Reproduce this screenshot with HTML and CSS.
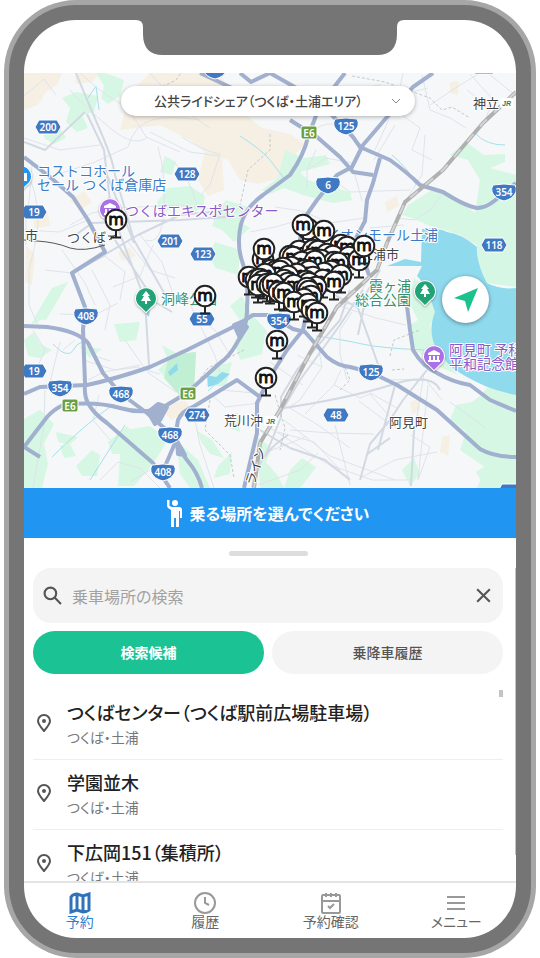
FILE: index.html
```html
<!DOCTYPE html>
<html lang="ja">
<head>
    <meta charset="UTF-8">
    <meta name="viewport" content="width=device-width, initial-scale=1.0">
    <title>公共ライドシェア</title>
    <link rel="stylesheet" href="styles.css">
</head>
<body>
    <div class="phone">
        <div class="bezel">
            <main class="screen">
                <div class="statusbar">
                    <svg class="notch" viewBox="0 0 268 35" aria-hidden="true">
                        <path d="M0 0Q7 0 7 7V14Q7 35 27 35H241Q261 35 261 14V7Q261 0 268 0Z"/>
                    </svg>
                </div>

                <section class="map-area">
                    <svg class="map" viewBox="24 73 492 415" preserveAspectRatio="xMidYMid slice">
                        <defs>
                            <g id="stop">
                                <path class="post" d="M0 10V17M-5 17.5H5"/>
                                <circle class="stop-face" r="10.3"/>
                                <text class="stop-m" y="5">m</text>
                            </g>
                            <path id="hex" d="M-9 -7H9L13 0L9 7H-9L-13 0Z"/>
                            <path id="shield" d="M-11 -7Q0 -9 11 -7Q13 -4 12 0Q9 7 0 9Q-9 7 -12 0Q-13 -4 -11 -7Z"/>
                            <rect id="express" x="-8" y="-7" width="16" height="13" rx="2"/>
                            <path id="tree" d="M0 -7L4 -2H2L5 3H1V6H-1V3H-5L-2 -2H-4Z"/>
                            <path id="museum" d="M0 -6L6 -3V-1H-6V-3ZM-5 0H-3V4H-5ZM-1 0H1V4H-1ZM3 0H5V4H3ZM-6 4H6V6H-6Z"/>
                            <path id="poi" d="M0 14L-5 9A10 10 0 1 1 5 9Z"/>
                        </defs>

                        <rect class="land" x="24" y="73" width="492" height="415"/>

                        <!-- Built-up patches -->
                        <g class="sand">
                            <path d="M24 73H62L57 85L45 93L38 105L24 110ZM75 73H100L92 82L76 84ZM130 92L150 73H220L240 110L262 128L290 134L305 144L290 160L280 178L258 184L240 180L228 160L205 152L190 140L160 125L120 130Z"/>
                            <path d="M205 152L222 158L224 190L208 196L198 180ZM70 200L84 191L92 202L80 210ZM33 206L48 212L50 226L34 228ZM26 245L35 255L32 285L25 282ZM167 405L185 400L190 408L172 420L165 414ZM118 252L130 248L136 256L122 261ZM385 202L397 196L399 206L387 212ZM410 402L418 399L420 410L412 414ZM442 437L450 435L448 456L440 452ZM450 82L459 81L458 95L450 93ZM415 332L425 331L427 341L418 341Z"/>
                        </g>

                        <!-- Parks and forest -->
                        <g class="green">
                            <path d="M96 73H105L124 80L120 96L108 104L101 98L104 86ZM62 98L76 92L98 96L94 112L82 115L88 128L77 132L66 122L70 108ZM42 131L58 124L66 138L54 144L45 139ZM165 156L176 162L172 175L160 172ZM157 202L168 188L190 186L205 196L203 207L192 214L178 206L160 214ZM226 200L248 207L240 222L250 228L234 242L222 230L212 226L218 210ZM215 242L240 250L238 275L216 268L208 256Z"/>
                            <path d="M285 150L304 158L326 155L330 164L300 172L308 180L350 192L352 200L333 203L306 196L284 188L270 194L262 190L278 178ZM336 84L350 90L380 84L382 90L355 94L338 92ZM450 155L466 142L484 155L505 154L505 162L490 168L516 175V287L487 283L478 262L477 245L460 235L438 228L430 226L412 218L402 215L408 205L432 190L450 193L475 213L480 180L468 160Z"/>
                            <path d="M414 278L432 292L436 312L430 326L438 350L458 375L428 362L412 345L410 325L418 320L408 300ZM492 382L516 393V488H477L486 468L460 450L466 432L450 420L456 405L472 402L480 396ZM476 472L488 464L496 480L484 486ZM230 306L242 296L250 312L266 330L262 354L240 360L234 342L244 326Z"/>
                            <path d="M52 288L68 282L55 305L46 320L34 318ZM40 310L55 302L48 316L30 326ZM80 346L102 349L90 358L84 352ZM24 340L34 332L40 344L52 350L40 358L28 356ZM114 324L140 322L136 340L120 342ZM162 345L178 354L196 352L194 390L184 395L166 378L158 370L168 360ZM206 386L215 366L232 362L226 386ZM22 420L40 410L54 424L44 444L48 464L42 488H24ZM56 432L78 437L69 445L58 442ZM60 446L70 444L76 456L64 458ZM76 466L92 450L100 455L97 476L82 476ZM108 442L127 426L140 441L128 454L112 454ZM126 430L150 426L168 440L158 456L148 470L134 486H118L120 456ZM176 440L198 460L210 488H190L180 474ZM196 430L212 440L224 458L210 454L202 443ZM228 414L238 413L240 432L230 428ZM290 470L302 458L316 467L308 478L300 488H284ZM256 436L272 448L266 462L278 476L284 488H260ZM402 470L414 458L420 474L410 486ZM218 466L232 452L230 474L214 478Z"/>
                        </g>
                        <path class="park" d="M168 360L178 354L196 352L194 390L180 396L164 378Z"/>

                        <!-- Lake and ponds -->
                        <path class="water" d="M422 229Q438 227 447 232Q462 234 477 247Q476 262 487 283Q500 290 516 288V395Q500 392 485 386Q461 375 450 366L437 350Q427 332 435 312Q426 284 417 276L422 266H387L405 259L421 262Z"/>
                        <path class="water" d="M207 375L216 377L222 372L230 374L218 384L208 387ZM168 372L177 363L178 370L170 376ZM145 313L150 309L149 317Z"/>
                        <g class="stream">
                            <path d="M88 98L96 86L99 110M240 136Q262 150 270 160T285 180M392 155Q410 170 416 185M53 344Q68 360 74 349T91 345M316 336Q345 340 362 344T424 350M52 457Q84 425 114 404M90 480L125 425M220 380L208 391M476 134Q486 145 505 145"/>
                        </g>

                        <!-- Local streets -->
                        <g class="street">
                            <path d="M70 90Q86 108 110 128T148 137M24 96L44 79L56 95M80 73Q100 92 115 100T146 137L180 152M150 73L180 107L210 128M200 120Q170 115 152 120T128 147L95 162L50 177M24 138L60 150L100 145M150 132L190 152L220 156M158 147Q166 174 164 210T145 240M174 162Q190 178 197 205L215 220M182 137Q205 152 220 154L210 185L200 196M32 165Q30 200 26 220V245M30 178Q42 210 36 240L29 270V305L40 330M70 225L92 213L116 208M62 250L85 283L95 305M72 273L105 256L125 272L120 300M45 270L72 273M92 270L110 305L105 330M128 242L150 270L175 278M140 235L162 262L175 300M113 287L140 276L153 245M24 230L60 232L88 220M118 208L180 205L230 212"/>
                            <path d="M188 300L215 356L220 372M194 316L215 330L230 355M60 314L95 315L118 303M75 340L63 350M33 330L45 350L34 375M45 390L44 425L33 488M50 382L60 342M83 360L115 370L140 367M125 340L146 370L160 374M104 372L88 380M104 372L140 365M147 372L176 392M99 395L93 420L110 440M92 355L110 361M130 482L150 470L170 465M100 480L118 462L140 468L160 488M195 420L200 445L214 488M212 395L225 407L260 403M222 390L254 393"/>
                            <path d="M315 130Q325 120 345 126M316 150L307 170V188M307 170L326 158L352 163M330 178L350 192L410 190M352 164L362 201M395 125L374 160M403 73L395 110L420 128L412 150L432 160M422 75L430 110L450 118L466 128M430 105L460 85L480 73M425 135L422 175L405 202M467 90L490 108L485 120M428 88L400 95L375 150M488 73L516 96M470 74L497 104M444 192L430 210L415 220L395 218M404 225L370 228M275 207L302 211L330 223L364 218M250 232L275 227L303 219M268 240L260 280L275 295M336 305L355 303L367 281"/>
                            <path d="M337 305L376 318L406 325M352 312L340 330V354L347 380M318 345L322 367L300 400L288 408M297 355L322 367M341 370L334 385L305 414M334 385L360 398L370 394L396 424M370 393L397 408M359 401L387 422M288 407L318 425L350 448M284 420L330 456L395 480M270 428L350 478M278 432L314 442L340 470M290 430L330 433L374 434M335 425L350 485M258 485L300 470L318 453M260 455L305 437M330 465L372 480H411M390 380L425 379L442 400M428 385L418 480M411 435L430 447L418 480M450 402L486 428M424 373L414 435M360 478L395 460L437 452M303 385L270 362M265 330L274 352"/>
                        </g>
                        <g class="avenue">
                            <path d="M76 73Q87 100 100 130T115 175L134 240L167 298M87 114L104 150L111 210L145 300L149 365M104 167L134 243M77 234L92 223L180 220L226 217M72 274L138 235L180 215L232 210M115 240L155 302L172 312M24 142L45 150L85 112M380 270L367 292L358 335M284 408Q350 398 391 385T440 390M360 480L370 444L390 420L403 400L427 370M395 385L378 450M252 487Q257 455 288 435M280 414L300 380L340 325L363 290M335 295L358 308L380 370"/>
                            <path d="M350 290L340 320L297 370L281 397V417L265 457M414 430L411 486M390 438L366 455M260 430L290 448L325 460L350 480"/>
                        </g>
                        <path class="border-line" d="M352 76L385 82L430 98L442 110L452 107L470 118M270 134V150L248 170L240 205M244 350L208 368L190 392M210 400L205 430L230 455L234 478M390 356L394 340L420 330M392 370L404 369M340 390L350 380L345 367M275 395L285 428L280 450M158 89L176 80L181 73"/>

                        <!-- Main roads -->
                        <g class="road">
                            <path d="M345 73L320 105L308 137Q304 155 290 175L263 195Q246 207 241 224Q236 245 243 264Q249 285 247 307Q248 326 237 343Q229 357 220 363L187 393L160 409Q140 414 120 408Q95 401 63 405Q53 410 47 417L24 447"/>
                            <path d="M433 73L413 87L387 117L363 145L352 167L337 175L317 200L303 220L297 260L309 300L303 330L287 350L270 377L257 403V433L244 488"/>
                            <path d="M240 73L251 82L270 73M270 73L300 90L327 110L353 137L360 147L390 160Q408 173 420 185L443 192Q465 206 477 208Q489 208 503 193L516 183"/>
                            <path d="M290 120L317 137L340 157L353 172L373 175M380 158L373 183L367 200L365 221L356 238"/>
                            <path d="M24 394L40 387L87 385Q115 379 150 367L187 350L237 325L253 315H270L293 329L305 332L327 357Q338 366 350 367L370 372L397 385L437 410L480 449Q494 457 516 457"/>
                            <path d="M24 157L50 177L73 197L88 220L105 252L72 273L85 307L83 330L85 383Q84 396 88 403Q93 413 107 423L153 463L170 488"/>
                            <path d="M24 326L47 327Q78 331 88 343L103 373L120 393L147 413L170 433Q174 443 187 460Q198 473 202 488"/>
                            <path d="M163 471L175 443Q176 430 178 420Q182 411 193 407L237 380L260 397M24 447L40 457M356 238L369 275M405 290L410 330L413 350Q423 367 437 373Q452 382 470 385L490 400L516 411M200 73L232 88"/>
                            <path class="junction" d="M148 412L158 404L167 407L160 420L155 424ZM234 325L241 322L247 327L240 338ZM177 441L185 455L178 454Z"/>
                        </g>

                        <!-- Railways -->
                        <path class="rail" d="M516 92L483 123L443 170L405 202L387 243L377 270L337 307L310 353L280 410L260 443L254 488"/>
                        <path class="rail-dash" d="M516 92L483 123L443 170L405 202L387 243L377 270L337 307L310 353L280 410L260 443L254 488"/>
                        <path class="line-black" d="M24 240L37 241Q55 242 70 248Q84 252 105 245"/>

                        <!-- Route markers -->
                        <g class="route">
                            <use href="#hex" x="48" y="127"/><text x="48" y="131">200</text>
                            <use href="#hex" x="187" y="174"/><text x="187" y="178">128</text>
                            <use href="#hex" x="34" y="212"/><text x="34" y="216">19</text>
                            <use href="#hex" x="170" y="241"/><text x="170" y="245">201</text>
                            <use href="#hex" x="203" y="254"/><text x="203" y="258">123</text>
                            <use href="#hex" x="202" y="319"/><text x="202" y="323">55</text>
                            <use href="#hex" x="34" y="371"/><text x="34" y="375">19</text>
                            <use href="#hex" x="197" y="415"/><text x="197" y="419">274</text>
                            <use href="#hex" x="336" y="415"/><text x="336" y="419">48</text>
                            <use href="#hex" x="494" y="245"/><text x="494" y="249">118</text>
                            <use href="#shield" x="346" y="126"/><text x="346" y="130">125</text>
                            <use href="#shield" x="328" y="185"/><text x="328" y="189">6</text>
                            <use href="#shield" x="504" y="192"/><text x="504" y="196">354</text>
                            <use href="#shield" x="86" y="316"/><text x="86" y="320">408</text>
                            <use href="#shield" x="279" y="321"/><text x="279" y="325">354</text>
                            <use href="#shield" x="60" y="388"/><text x="60" y="392">354</text>
                            <use href="#shield" x="121" y="394"/><text x="121" y="398">468</text>
                            <use href="#shield" x="371" y="372"/><text x="371" y="376">125</text>
                            <use href="#shield" x="170" y="435"/><text x="170" y="439">468</text>
                            <use href="#shield" x="163" y="472"/><text x="163" y="476">408</text>
                            <use href="#shield" x="215" y="70"/>
                            <use href="#hex" x="484" y="67"/>
                            <use href="#hex" x="511" y="491"/>
                        </g>
                        <g class="route toll">
                            <use href="#express" x="309" y="133"/><text x="309" y="137">E6</text>
                            <use href="#express" x="188" y="394"/><text x="188" y="398">E6</text>
                            <use href="#express" x="70" y="406"/><text x="70" y="410">E6</text>
                        </g>

                        <!-- Place names -->
                        <g class="place">
                            <text x="25" y="240">市</text>
                            <text x="67" y="242">つくば</text>
                            <text x="360" y="259">土浦市</text>
                            <text x="473" y="108">神立</text>
                            <text x="224" y="425">荒川沖</text>
                            <text x="389" y="427">阿見町</text>
                            <text class="line-name" transform="translate(254 486) rotate(-72)">ライン</text>
                        </g>
                        <g class="jr">
                            <rect x="500" y="98" width="13" height="10" rx="2"/><text x="502" y="106">JR</text>
                            <rect x="264" y="416" width="13" height="10" rx="2"/><text x="266" y="424">JR</text>
                            <path class="tx-mark" d="M108 236H114M111 236V240M109 240L115 235"/>
                        </g>
                        <g class="poi shop">
                            <use href="#poi" x="21" y="176"/>
                            <path class="glyph" d="M20 173H27V181H20Z"/>
                            <text x="37" y="176">コストコホール</text>
                            <text x="37" y="190">セール つくば倉庫店</text>
                            <text x="326" y="240">イオンモール土浦</text>
                        </g>
                        <g class="poi culture">
                            <use href="#poi" x="110" y="209"/>
                            <use class="glyph" href="#museum" x="110" y="209"/>
                            <text x="125" y="216">つくばエキスポセンター</text>
                            <use href="#poi" x="434" y="356"/>
                            <use class="glyph" href="#museum" x="434" y="356"/>
                            <text x="449" y="355">阿見町 予科</text>
                            <text x="449" y="369">平和記念館</text>
                        </g>
                        <g class="poi nature">
                            <use href="#poi" x="146" y="298"/>
                            <use class="glyph" href="#tree" x="146" y="298"/>
                            <text x="161" y="304">洞峰公園</text>
                            <use href="#poi" x="425" y="291"/>
                            <use class="glyph" href="#tree" x="425" y="291"/>
                            <text x="369" y="291">霞ヶ浦</text>
                            <text x="355" y="305">総合公園</text>
                        </g>

                        <!-- Ride stops -->
                        <g class="stops">
                            <use href="#stop" x="116" y="220"/>
                            <use href="#stop" x="205" y="296"/>
                            <use href="#stop" x="308" y="229"/>
                            <use href="#stop" x="303" y="225"/>
                            <use href="#stop" x="324" y="231"/>
                            <use href="#stop" x="263" y="259"/>
                            <use href="#stop" x="264" y="249"/>
                            <use href="#stop" x="341" y="245"/>
                            <use href="#stop" x="347" y="247"/>
                            <use href="#stop" x="299" y="251"/>
                            <use href="#stop" x="313" y="250"/>
                            <use href="#stop" x="318" y="251"/>
                            <use href="#stop" x="327" y="254"/>
                            <use href="#stop" x="333" y="256"/>
                            <use href="#stop" x="290" y="256"/>
                            <use href="#stop" x="293" y="257"/>
                            <use href="#stop" x="349" y="257"/>
                            <use href="#stop" x="359" y="260"/>
                            <use href="#stop" x="364" y="246"/>
                            <use href="#stop" x="311" y="259"/>
                            <use href="#stop" x="321" y="260"/>
                            <use href="#stop" x="302" y="262"/>
                            <use href="#stop" x="334" y="262"/>
                            <use href="#stop" x="338" y="263"/>
                            <use href="#stop" x="315" y="261"/>
                            <use href="#stop" x="291" y="267"/>
                            <use href="#stop" x="283" y="268"/>
                            <use href="#stop" x="271" y="270"/>
                            <use href="#stop" x="276" y="271"/>
                            <use href="#stop" x="280" y="271"/>
                            <use href="#stop" x="331" y="271"/>
                            <use href="#stop" x="324" y="273"/>
                            <use href="#stop" x="305" y="270"/>
                            <use href="#stop" x="309" y="271"/>
                            <use href="#stop" x="297" y="274"/>
                            <use href="#stop" x="265" y="274"/>
                            <use href="#stop" x="249" y="277"/>
                            <use href="#stop" x="256" y="280"/>
                            <use href="#stop" x="260" y="279"/>
                            <use href="#stop" x="263" y="281"/>
                            <use href="#stop" x="288" y="276"/>
                            <use href="#stop" x="313" y="277"/>
                            <use href="#stop" x="341" y="275"/>
                            <use href="#stop" x="258" y="285"/>
                            <use href="#stop" x="267" y="284"/>
                            <use href="#stop" x="284" y="280"/>
                            <use href="#stop" x="306" y="281"/>
                            <use href="#stop" x="323" y="280"/>
                            <use href="#stop" x="288" y="283"/>
                            <use href="#stop" x="309" y="283"/>
                            <use href="#stop" x="334" y="282"/>
                            <use href="#stop" x="270" y="286"/>
                            <use href="#stop" x="273" y="284"/>
                            <use href="#stop" x="294" y="285"/>
                            <use href="#stop" x="316" y="287"/>
                            <use href="#stop" x="279" y="292"/>
                            <use href="#stop" x="284" y="293"/>
                            <use href="#stop" x="307" y="288"/>
                            <use href="#stop" x="309" y="291"/>
                            <use href="#stop" x="311" y="296"/>
                            <use href="#stop" x="304" y="299"/>
                            <use href="#stop" x="294" y="302"/>
                            <use href="#stop" x="308" y="304"/>
                            <use href="#stop" x="312" y="310"/>
                            <use href="#stop" x="317" y="313"/>
                            <use href="#stop" x="277" y="341"/>
                            <use href="#stop" x="266" y="378"/>
                        </g>
                    </svg>

                    <button class="area-select" type="button">
                        <span>公共ライドシェア（つくば・土浦エリア）</span>
                        <svg viewBox="0 0 10 10" aria-hidden="true"><path d="M1 3L5 7L9 3"/></svg>
                    </button>
                    <button class="locate" type="button" aria-label="現在地">
                        <svg viewBox="0 0 24 24" aria-hidden="true"><path d="M24 0L14 24L11 13L0 10Z"/></svg>
                    </button>
                </section>

                <div class="banner">
                    <svg viewBox="0 0 15 27" aria-hidden="true">
                        <circle cx="8" cy="3" r="3"/>
                        <path d="M0 0H2.500V6L5 7H12Q15 7 15 10V18H13V11H12V27H9V18H7V27H4V10L1 8Q0 7 0 5Z"/>
                    </svg>
                    <span>乗る場所を選んでください</span>
                </div>

                <section class="sheet">
                    <div class="handle"></div>
                    <div class="search">
                        <label for="stop-search" aria-label="乗車場所の検索">
                            <svg viewBox="0 0 18 18" aria-hidden="true"><circle cx="7" cy="7" r="5.500"/><path d="M11 11L17 17"/></svg>
                        </label>
                        <input id="stop-search" type="text" placeholder="乗車場所の検索">
                        <button class="clear" type="button" aria-label="クリア">
                            <svg viewBox="0 0 18 18" aria-hidden="true"><path d="M3 3L15 15M15 3L3 15"/></svg>
                        </button>
                    </div>
                    <div class="tabs">
                        <button class="tab active" type="button">検索候補</button>
                        <button class="tab" type="button">乗降車履歴</button>
                    </div>
                    <ul class="results">
                        <li class="result">
                            <svg class="pin" viewBox="0 0 14 18" aria-hidden="true"><path d="M7 17Q1 10 1 7A6 6 0 0 1 13 7Q13 10 7 17Z"/><circle cx="7" cy="7" r="2"/></svg>
                            <div>
                                <h2>つくばセンター（つくば駅前広場駐車場）</h2>
                                <p>つくば・土浦</p>
                            </div>
                        </li>
                        <li class="result">
                            <svg class="pin" viewBox="0 0 14 18" aria-hidden="true"><path d="M7 17Q1 10 1 7A6 6 0 0 1 13 7Q13 10 7 17Z"/><circle cx="7" cy="7" r="2"/></svg>
                            <div>
                                <h2>学園並木</h2>
                                <p>つくば・土浦</p>
                            </div>
                        </li>
                        <li class="result">
                            <svg class="pin" viewBox="0 0 14 18" aria-hidden="true"><path d="M7 17Q1 10 1 7A6 6 0 0 1 13 7Q13 10 7 17Z"/><circle cx="7" cy="7" r="2"/></svg>
                            <div>
                                <h2>下広岡151（集積所）</h2>
                                <p>つくば・土浦</p>
                            </div>
                        </li>
                    </ul>
                    <i class="thumb list-thumb"></i>
                    <i class="thumb page-thumb"></i>
                </section>

                <nav class="tabbar">
                    <div class="tabbar-inner">
                        <a class="current" href="#">
                            <svg viewBox="0 0 22 22" aria-hidden="true"><path d="M2 5Q4 2 8 2L14 4Q17 3 20 2V18Q17 20 14 20L8 18Q5 19 2 20ZM8 2V18M14 4V20"/></svg>
                            予約
                        </a>
                        <a href="#">
                            <svg viewBox="0 0 22 22" aria-hidden="true"><circle cx="11" cy="11" r="10"/><path d="M11 5V11L15 13"/></svg>
                            履歴
                        </a>
                        <a href="#">
                            <svg viewBox="0 0 22 22" aria-hidden="true"><path d="M3 3H19Q20 3 20 4V20Q20 21 19 21H3Q2 21 2 20V4Q2 3 3 3ZM2 9H20M6 1V5M11 1V5M16 1V5M8 14L10 16L14 12"/></svg>
                            予約確認
                        </a>
                        <a href="#">
                            <svg viewBox="0 0 22 22" aria-hidden="true"><path d="M2 5H20M2 11H20M2 17H20"/></svg>
                            メニュー
                        </a>
                    </div>
                </nav>
            </main>
        </div>
    </div>
</body>
</html>
```
FILE: styles.css
```css
* {
    box-sizing: border-box;
}

body {
    margin: 0;
    background: #fff;
    color: #222;
    font-family: "Noto Sans CJK JP", sans-serif;
    font-feature-settings: "palt";
}

button, input {
    font: inherit;
    font-feature-settings: inherit;
    border: 0;
    padding: 0;
}

svg {
    display: block;
}

/* Phone frame */
.phone {
    height: 100vh;
    margin: 0 4px;
    padding: 5px;
    background: #a6a6a6;
    border-radius: 72px;
}

.bezel {
    height: 100%;
    padding: 15px;
    background: #757575;
    border-radius: 67px;
}

.screen {
    height: 100%;
    display: flex;
    flex-direction: column;
    background: #fff;
    border-radius: 52px;
    overflow: hidden;
}

.statusbar {
    height: 53px;
    flex: none;
    display: flex;
    justify-content: center;
}

.notch {
    width: 268px;
    height: 35px;
    fill: #757575;
}

/* Map */
.map-area {
    position: relative;
    flex: 1;
    min-height: 0;
    overflow: hidden;
}

.map {
    width: 100%;
    height: 100%;
    font-feature-settings: normal;
}

.land { fill: #f6f7f9; }
.sand { fill: #f6efe3; }
.green { fill: #d6f7e3; }
.park { fill: #c0efd3; }
.water { fill: #90daee; }

.stream, .street, .avenue, .border-line, .road, .rail, .rail-dash, .line-black {
    fill: none;
    stroke-linejoin: round;
}

.stream { stroke: #a5e0ec; stroke-width: 1; }
.street { stroke: #dfe3ea; stroke-width: 1; }
.avenue { stroke: #d2d9e3; stroke-width: 2; }
.border-line { stroke: #c5c8cc; stroke-width: 1; stroke-dasharray: 3 2; }
.road { stroke: #a1b0ce; stroke-width: 4; }
.junction { fill: #a1b0ce; }
.rail { stroke: #b0b0b0; stroke-width: 4; }
.rail-dash { stroke: #d4d4d4; stroke-width: 2; stroke-dasharray: 10 10; }
.line-black { stroke: #555; stroke-width: 1; }

.map text {
    font-size: 14px;
    paint-order: stroke;
    stroke: #fff;
    stroke-width: 2px;
    stroke-linejoin: round;
}

.route use {
    fill: #3f78c3;
    stroke: #fff;
    stroke-width: 1;
}

.map .route text {
    font: 600 10px "Noto Sans", sans-serif;
    text-anchor: middle;
    fill: #fff;
    stroke: none;
}

.toll use { fill: #6a9f43; }

.map .place text {
    font-size: 13px;
    fill: #444;
}

.jr rect { fill: #fff; }

.map .jr text {
    font: italic bold 7px "Liberation Sans", sans-serif;
    fill: #2a8060;
    stroke: none;
}

.tx-mark {
    fill: none;
    stroke: #444;
    stroke-width: 1;
}

.poi use {
    stroke: #fff;
    stroke-width: 2;
    paint-order: stroke;
    filter: drop-shadow(0 1px 1px rgba(0, 0, 0, 0.3));
}

.poi .glyph {
    fill: #fff;
    stroke: none;
    filter: none;
}

.shop { fill: #2196f3; }
.shop text { fill: #3b7cc9; }
.culture { fill: #a970ea; }
.culture text { fill: #8b59c8; }
.nature { fill: #22a377; }
.nature text { fill: #35906d; }

.post {
    fill: none;
    stroke: #222;
    stroke-width: 2;
}

.stop-face {
    fill: #fff;
    stroke: #222;
    stroke-width: 2;
}

.map .stop-m {
    font: 400 16px "DejaVu Sans", sans-serif;
    text-anchor: middle;
    fill: #111;
    stroke: #111;
    stroke-width: 1px;
}

.area-select {
    position: absolute;
    top: 13px;
    left: 97px;
    right: 101px;
    height: 30px;
    padding: 0 14px 0 33px;
    display: flex;
    align-items: center;
    justify-content: space-between;
    background: #fff;
    border-radius: 15px;
    box-shadow: 0 1px 4px rgba(0, 0, 0, 0.3);
    color: #444;
    font-size: 13px;
    font-weight: 500;
    line-height: 16px;
    white-space: nowrap;
}

.area-select svg {
    width: 10px;
    height: 10px;
    fill: none;
    stroke: #888;
    stroke-width: 1;
}

.locate {
    position: absolute;
    right: 27px;
    bottom: 165px;
    width: 47px;
    height: 47px;
    display: flex;
    align-items: center;
    justify-content: center;
    background: #fff;
    border-radius: 50%;
    box-shadow: 0 1px 4px rgba(0, 0, 0, 0.4);
}

.locate svg {
    width: 24px;
    height: 24px;
    fill: #1bc28e;
}

.banner {
    flex: none;
    height: 50px;
    padding-right: 4px;
    display: flex;
    align-items: center;
    justify-content: center;
    gap: 8px;
    background: #2095f2;
    color: #fff;
    font-size: 16px;
    font-weight: 700;
}

.banner svg {
    width: 15px;
    height: 27px;
    fill: #fff;
}

/* Bottom sheet */
.sheet {
    position: relative;
    flex: none;
    padding: 13px 13px 0 9px;
}

.handle {
    width: 79px;
    height: 5px;
    margin: 0 auto 12px;
    background: #ddd;
    border-radius: 3px;
}

.search {
    height: 55px;
    display: flex;
    align-items: center;
    gap: 10px;
    padding: 0 10px;
    background: #f4f4f4;
    border-radius: 18px;
}

.search svg {
    width: 19px;
    height: 19px;
    fill: none;
    stroke: #555;
    stroke-width: 2;
}

.search input {
    flex: 1;
    min-width: 0;
    background: none;
    font-size: 16px;
    outline: 0;
}

.search input::placeholder {
    color: #a2a2a2;
}

.clear {
    background: none;
}

.tabs {
    display: flex;
    gap: 8px;
    margin: 8px 0 16px;
}

.tab {
    flex: 1;
    height: 43px;
    padding-bottom: 2px;
    background: #f4f4f4;
    border-radius: 22px;
    color: #555;
    font-size: 14px;
    font-weight: 500;
}

.tab.active {
    background: #1bc293;
    color: #fff;
    font-weight: 700;
}

.results {
    max-height: 191px;
    margin: 0;
    padding: 0;
    overflow: hidden;
    list-style: none;
}

.result {
    height: 70px;
    display: flex;
    align-items: center;
    gap: 16px;
    padding: 0 0 3px 4px;
    border-bottom: 1px solid #eee;
}

.pin {
    width: 14px;
    height: 18px;
    fill: none;
    stroke: #555;
    stroke-width: 2;
}

.pin circle {
    fill: #555;
    stroke: none;
}

.result h2 {
    margin: 0;
    font-size: 18px;
    font-weight: 500;
    line-height: 28px;
}

.result p {
    margin: 0;
    color: #777;
    font-size: 14px;
    line-height: 22px;
}

.thumb {
    position: absolute;
    background: #c4c4c4;
}

.list-thumb {
    top: 152px;
    right: 13px;
    width: 4px;
    height: 7px;
}

.page-thumb {
    top: 30px;
    right: 0;
    width: 1px;
    height: 287px;
}

/* Bottom navigation */
.tabbar {
    flex: none;
    height: 57px;
    border-top: 2px solid #e4e4e4;
}

.tabbar-inner {
    display: grid;
    grid-template-columns: repeat(4, 1fr);
    margin: 0 -3px 0 -7px;
    padding-top: 9px;
}

.tabbar a {
    display: flex;
    flex-direction: column;
    align-items: center;
    color: #666;
    font-size: 14px;
    line-height: 14px;
    text-decoration: none;
}

.tabbar svg {
    width: 22px;
    height: 22px;
    fill: none;
    stroke: #999;
    stroke-width: 2;
}

.tabbar .current {
    color: #2f7fd0;
}

.tabbar .current svg {
    stroke: #2f72b9;
    stroke-width: 3;
}
```
